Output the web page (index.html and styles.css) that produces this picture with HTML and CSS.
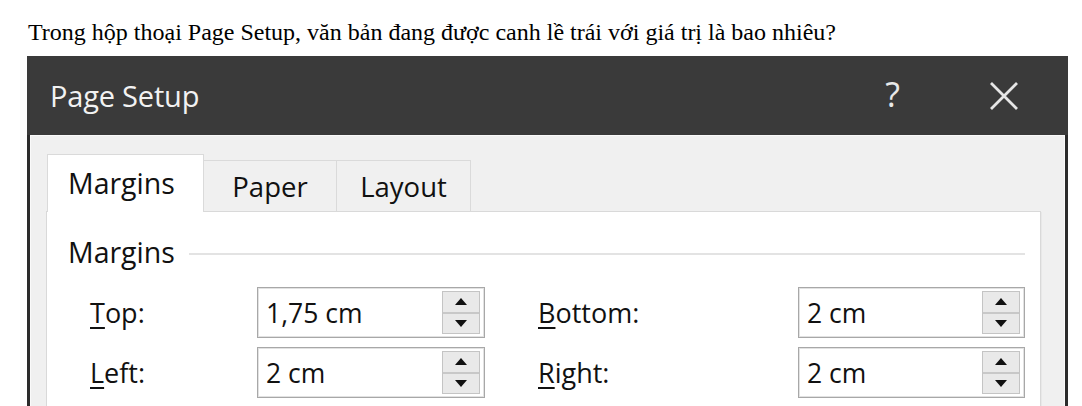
FILE: index.html
```html
<!DOCTYPE html>
<html lang="vi">
<head>
<meta charset="utf-8">
<title>Page Setup</title>
<link rel="stylesheet" href="styles.css">
</head>
<body>
<p class="question">Trong hộp thoại Page Setup, văn bản đang được canh lề trái với giá trị là bao nhiêu?</p>

<div class="dialog">
  <div class="titlebar">
    <span class="title">Page Setup</span>
    <span class="help">?</span>
    <svg class="close" width="32" height="30" viewBox="0 0 32 30" aria-label="Close">
      <path d="M3 2 L29 28 M29 2 L3 28" stroke="#e6e6e6" stroke-width="2.8" fill="none"/>
    </svg>
  </div>

  <div class="body">
    <div class="tabs">
      <div class="tab tab-margins active">Margins</div>
      <div class="tab tab-paper">Paper</div>
      <div class="tab tab-layout">Layout</div>
    </div>

    <div class="panel">
      <div class="group-head">
        <span class="group-label">Margins</span>
        <span class="group-rule"></span>
      </div>

      <div class="fields">
        <label class="field-label"><u>T</u>op:</label>
        <div class="spin">
          <span class="spin-value">1,75 cm</span>
          <span class="spin-btns"><span class="arrow up"></span><span class="arrow down"></span></span>
        </div>
        <label class="field-label col2"><u>B</u>ottom:</label>
        <div class="spin">
          <span class="spin-value">2 cm</span>
          <span class="spin-btns"><span class="arrow up"></span><span class="arrow down"></span></span>
        </div>

        <label class="field-label"><u>L</u>eft:</label>
        <div class="spin">
          <span class="spin-value">2 cm</span>
          <span class="spin-btns"><span class="arrow up"></span><span class="arrow down"></span></span>
        </div>
        <label class="field-label col2"><u>R</u>ight:</label>
        <div class="spin">
          <span class="spin-value">2 cm</span>
          <span class="spin-btns"><span class="arrow up"></span><span class="arrow down"></span></span>
        </div>
      </div>
    </div>
  </div>
</div>
</body>
</html>
```

FILE: styles.css
```css
html, body {
  margin: 0;
  padding: 0;
  background: #ffffff;
  overflow: hidden;
  height: 406px;
}

.question {
  margin: 0;
  padding: 18px 0 0 28px;
  height: 28px;
  font-family: "Liberation Serif", "Times New Roman", serif;
  font-size: 24px;
  line-height: 28px;
  color: #000;
}

.dialog {
  margin: 10px 0 0 27px;
  width: 1041px;
  font-family: "Open Sans", "Noto Sans", sans-serif;
  color: #111;
}

/* dark title bar */
.titlebar {
  height: 79px;
  background: #3a3a3a;
  display: flex;
  align-items: center;
  padding-left: 23px;
  box-sizing: border-box;
}

.title {
  font-size: 29px;
  color: #f2f2f2;
  flex: 1;
  letter-spacing: -0.2px;
}

.help {
  font-size: 34px;
  color: #e8e8e8;
  margin-right: 88px;
  margin-top: -4px;
}

.close {
  margin-right: 48px;
}

/* dialog client area */
.body {
  background: #f0f0f0;
  border-left: 3px solid #2c2c2c;
  border-right: 3px solid #2c2c2c;
  box-shadow: inset 1px 1px 0 #fafafa, inset -1px 0 0 #fafafa;
  padding: 19px 24px 40px 16px;
  height: 300px;
}

.tabs {
  display: flex;
  align-items: flex-end;
  height: 57px;
  padding-left: 1px;
}

.tab {
  height: 51px;
  box-sizing: border-box;
  border: 1px solid #dadada;
  border-bottom: none;
  background: #f0f0f0;
  font-size: 27.5px;
  display: flex;
  align-items: center;
  justify-content: center;
  margin-left: -1px;
}

.tab.active {
  height: 58px;
  background: #ffffff;
  position: relative;
  z-index: 1;
  margin-bottom: -1px;
  padding-bottom: 2px;
  justify-content: flex-start;
  padding-left: 20px;
  font-size: 28.5px;
}

.tab-margins { width: 157px; margin-left: 0; }
.tab-paper { width: 134px; }
.tab-layout { width: 135px; }

/* white tab page */
.panel {
  background: #ffffff;
  border: 1px solid #d9d9d9;
  box-shadow: 1px 1px 0 #e8e8e8;
  height: 260px;
  padding: 25px 15px 0 21px;
}

.group-head {
  display: flex;
  align-items: center;
  height: 30px;
}

.group-label {
  font-size: 28.5px;
  margin-right: 14px;
}

.group-rule {
  flex: 1;
  height: 2px;
  background: #e3e3e3;
  margin-top: 4px;
}

.fields {
  display: grid;
  grid-template-columns: 167px 228px 313px 227px;
  grid-auto-rows: 51px;
  row-gap: 9px;
  margin-top: 20px;
  margin-left: 22px;
  align-items: center;
}

.field-label {
  font-size: 27px;
}

.field-label.col2 {
  padding-left: 53px;
}

.field-label u {
  text-decoration-thickness: 2px;
  text-underline-offset: 4px;
}

.spin {
  height: 51px;
  box-sizing: border-box;
  border: 1px solid #a8a8a8;
  box-shadow: inset 0 0 0 1px #e2e2e2;
  display: flex;
  align-items: center;
  padding: 3px 4px 3px 8px;
  background: #ffffff;
}

.spin-value {
  flex: 1;
  font-size: 26.5px;
}

.spin-btns {
  width: 38px;
  height: 100%;
  box-sizing: border-box;
  border: 1px solid #c4c4c4;
  background: #e9e9e9;
  display: flex;
  flex-direction: column;
}

.arrow {
  flex: 1;
  display: flex;
  align-items: center;
  justify-content: center;
}

.arrow.up {
  border-bottom: 2px solid #c8c8c8;
}

.arrow::before {
  content: "";
  width: 0;
  height: 0;
  border-left: 6px solid transparent;
  border-right: 6px solid transparent;
}

.arrow.up::before {
  border-bottom: 7px solid #111;
}

.arrow.down::before {
  border-top: 7px solid #111;
}
```
